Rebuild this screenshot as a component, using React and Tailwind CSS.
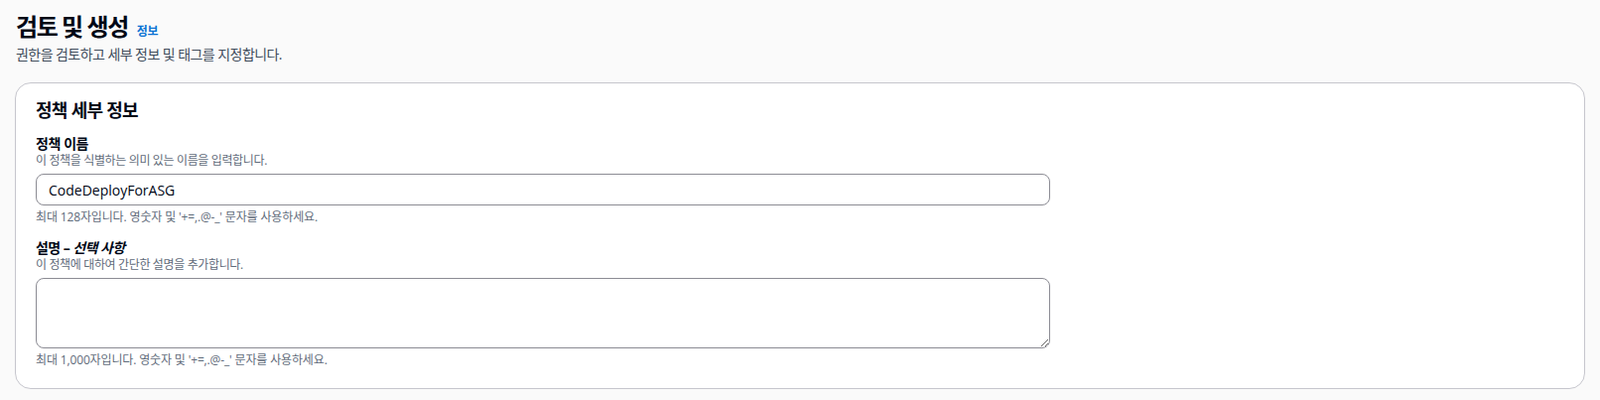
import React, { useState } from 'react';

const font = { fontFamily: '"Open Sans", "Noto Sans CJK KR", sans-serif' };

const App = () => {
    const [name, setName] = useState('CodeDeployForASG');
    const [desc, setDesc] = useState('');

    return (
        <div className="min-h-[403px] bg-[#fafafa] px-[15px] pt-[12px] text-[#000716]" style={font}>
            {/* Header */}
            <div className="flex items-baseline gap-[9px] pl-[1px]">
                <h1 className="text-[24px] leading-[30px] font-bold tracking-[-0.06em]">검토 및 생성</h1>
                <a href="#" className="text-[12px] font-bold text-[#0972d3] tracking-[-0.03em]">정보</a>
            </div>
            <p className="mt-[3px] pl-[1px] text-[14px] leading-[20px] text-[#414d5c] tracking-[-0.04em]">권한을 검토하고 세부 정보 및 태그를 지정합니다.</p>

            {/* Policy details card */}
            <div className="mt-[18px] rounded-[16px] border border-[#c6c6cd] bg-white px-[20px] pt-[14px] pb-[20px]">
                <h2 className="text-[18px] leading-[26px] font-bold tracking-[-0.04em]">정책 세부 정보</h2>

                <div className="mt-[12px]">
                    <label className="block text-[14px] leading-[18px] font-bold tracking-[-0.03em]">정책 이름</label>
                    <p className="text-[12px] leading-[16px] text-[#5f6b7a] tracking-[-0.03em]">이 정책을 식별하는 의미 있는 이름을 입력합니다.</p>
                    <input
                        type="text"
                        value={name}
                        onChange={e => setName(e.target.value)}
                        className="mt-[5px] block h-[32px] w-[1022px] rounded-[8px] border border-[#8c8c94] px-[12px] text-[14px] outline-none"
                        style={font}
                    />
                    <p className="mt-[4px] text-[12px] leading-[16px] text-[#5f6b7a] tracking-[-0.012em]">최대 128자입니다. 영숫자 및 '+=,.@-_' 문자를 사용하세요.</p>
                </div>

                <div className="mt-[14px]">
                    <label className="block text-[14px] leading-[18px] font-bold tracking-[-0.04em]">
                        설명 – <i>선택 사항</i>
                    </label>
                    <p className="text-[12px] leading-[16px] text-[#5f6b7a] tracking-[-0.03em]">이 정책에 대하여 간단한 설명을 추가합니다.</p>
                    <textarea
                        value={desc}
                        onChange={e => setDesc(e.target.value)}
                        className="mt-[5px] block h-[71px] w-[1022px] rounded-[8px] border border-[#8c8c94] px-[12px] py-[4px] text-[14px] outline-none"
                        style={font}
                    />
                    <p className="mt-[4px] text-[12px] leading-[16px] text-[#5f6b7a] tracking-[-0.012em]">최대 1,000자입니다. 영숫자 및 '+=,.@-_' 문자를 사용하세요.</p>
                </div>
            </div>
        </div>
    );
};

export default App;
